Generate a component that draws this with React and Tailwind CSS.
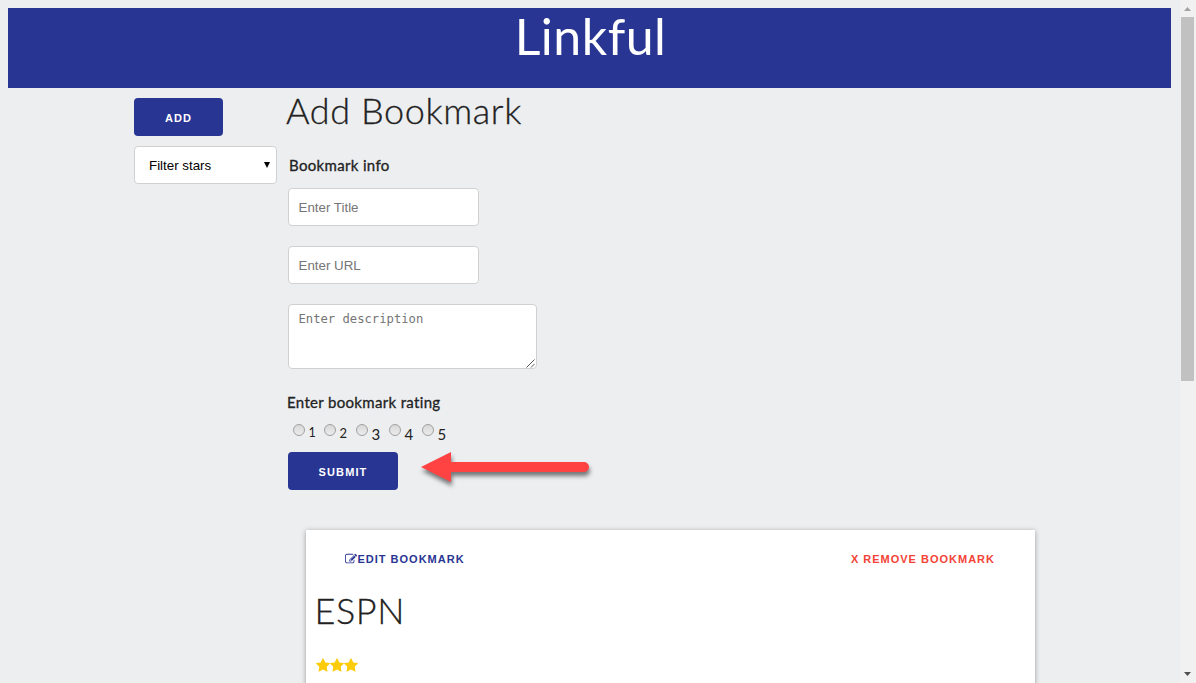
import React from "react";

const heading = "font-['Lato',sans-serif] text-[#222]";
const label = "text-[15px] leading-[24px] tracking-[0.33px] [-webkit-text-stroke:0.3px_#222]";
const button =
  "h-[38px] rounded-[4px] bg-[#283593] font-['Liberation_Sans',sans-serif] text-[11px] font-bold leading-[40px] tracking-[1.1px] text-white";
const field =
  "block rounded-[4px] border border-[#d1d1d1] bg-white px-[9.500px] text-[13.33px] placeholder-[#757575] outline-none";

function EditIcon() {
  return (
    <svg className="h-[12px] w-[12px]" viewBox="0 0 1792 1792" fill="currentColor">
      <path d="M888 1184l116-116-152-152-116 116v56h96v96h56zm440-720q-16-16-33 1l-350 350q-17 17-1 33t33-1l350-350q17-17 1-33zm80 594v190q0 119-84.500 203.500t-203.500 84.500h-832q-119 0-203.500-84.500t-84.500-203.500v-832q0-119 84.500-203.500t203.500-84.500h832q63 0 117 25 15 7 18 23 3 17-9 29l-49 49q-14 14-32 8-23-6-45-6h-832q-66 0-113 47t-47 113v832q0 66 47 113t113 47h832q66 0 113-47t47-113v-126q0-13 9-22l64-64q15-15 35-7t20 29zm-96-738l288 288-672 672h-288v-288zm444 132l-92 92-288-288 92-92q28-28 68-28t68 28l152 152q28 28 28 68t-28 68z" />
    </svg>
  );
}

function Star() {
  return (
    <svg className="h-[15px] w-[14px]" viewBox="64 0 1664 1792" fill="#fccc0a">
      <path d="M1728 647q0 22-26 48l-363 354 86 500q1 7 1 20 0 21-10.500 35.500t-30.500 14.500q-19 0-40-12l-449-236-449 236q-22 12-40 12-21 0-31.500-14.500t-10.500-35.500q0-6 2-20l86-500-364-354q-25-27-25-48 0-37 56-46l502-73 225-455q19-41 49-41t49 41l225 455 502 73q56 9 56 46z" />
    </svg>
  );
}

// Old-style figures: 1 and 2 sit at x-height, the others drop below the line.
const ratings = [
  { n: 1, box: "w-[31px]", digit: "pt-[2px] text-[12.5px]" },
  { n: 2, box: "w-[32px]", digit: "pt-[2px] text-[13px]" },
  { n: 3, box: "w-[33px]", digit: "pt-[3px] text-[15px]" },
  { n: 4, box: "w-[33px]", digit: "pt-[3px] text-[15px]" },
  { n: 5, box: "w-[33px]", digit: "pt-[3px] text-[15px]" },
];

function Arrow() {
  return (
    <svg
      className="-mt-[8px] ml-[20px] h-[50px] w-[182px] drop-shadow-[1px_4px_2px_rgba(0,0,0,0.5)]"
      viewBox="418 442 182 50"
      fill="#ff4343"
    >
      <path d="M421 467L451 452V462H584a5 5 0 0 1 0 10H451V482Z" />
    </svg>
  );
}

function Scrollbar() {
  return (
    <div className="flex h-full w-[17px] flex-col items-center border-l border-[#ececec] bg-[#f1f1f1] pr-[2px]">
      <svg className="h-[17px] w-[17px] shrink-0" viewBox="0 0 17 17" fill="#a3a3a3">
        <path d="M5 11L8.500 7L12 11Z" />
      </svg>
      <div className="h-[364px] w-[13px] bg-[#c1c1c1]" />
      <svg className="mt-auto h-[17px] w-[17px] shrink-0" viewBox="0 0 17 17" fill="#505050">
        <path d="M5 6L8.500 10L12 6Z" />
      </svg>
    </div>
  );
}

export default function App() {
  return (
    <div className="flex h-[683px] w-[1196px] overflow-hidden bg-[#edeef0]">
      <div className="flex min-w-0 flex-1 flex-col pl-2 pr-2 pt-2">
        <header className="h-[80px] shrink-0 bg-[#283593] text-center">
          <h1 className="pl-[2px] font-['Lato',sans-serif] text-[50px] font-normal leading-[56px] tracking-[0.5px] text-white">
            Linkful
          </h1>
        </header>

        <div className="flex pl-[126px]">
          <aside className="flex w-[143px] flex-col gap-[10px] pt-[10px]">
            <button className={button + " w-[89px]"}>ADD</button>
            <button className="flex h-[38px] items-center justify-between rounded-[4px] border border-[#d1d1d1] bg-white pl-[14px] pr-[6px] font-['Liberation_Sans',sans-serif] text-[13.33px] text-black">
              <span className="pt-[2px]">Filter stars</span>
              <svg className="h-[6px] w-[6px]" viewBox="0 0 6 6">
                <path d="M0 0H6L3 6Z" />
              </svg>
            </button>
          </aside>

          <main className="ml-[11px] w-[748px]">
            <h2 className={heading + " -ml-[2px] h-[58px] whitespace-nowrap text-[36px] font-light leading-[45px] tracking-[0.6px] [-webkit-text-stroke:0.3px_#222]"}>
              Add Bookmark
            </h2>
            <h3 className={heading + " ml-[1px] h-[42px] pt-[7px] " + label}>Bookmark info</h3>
            <input
              className={field + " h-[38px] w-[191px] font-['Liberation_Sans',sans-serif]"}
              placeholder="Enter Title"
            />
            <input
              className={field + " mt-[20px] h-[38px] w-[191px] font-['Liberation_Sans',sans-serif]"}
              placeholder="Enter URL"
            />
            <div className={field + " mt-[20px] flex h-[65px] w-[249px] justify-between pr-0"}>
              <span className="pt-[6px] font-['DejaVu_Sans_Mono',monospace] text-[12.2px] leading-[16px] text-[#757575]">
                Enter description
              </span>
              <svg className="h-[9px] w-[10px] self-end" viewBox="0 0 10 9" stroke="#555" fill="none">
                <path d="M0.500 8.500L8.500 0.500M5 8.500L8.500 5" />
              </svg>
            </div>
            <h3 className={heading + " -ml-px mt-[21px] h-[31px] " + label}>Enter bookmark rating</h3>
            <div className="flex h-[31px] pl-[5px] pt-[3px]">
              {ratings.map((r) => (
                <label key={r.n} className={"flex gap-[3.500px] " + r.box}>
                  <input
                    type="radio"
                    name="rating"
                    className="h-[12px] w-[12px] appearance-none rounded-full border border-[#a0a0a0] bg-linear-to-b from-[#d8d8d8] to-[#ececec]"
                  />
                  <span className={"font-['Lato',sans-serif] leading-[14px] text-[#222] " + r.digit}>{r.n}</span>
                </label>
              ))}
            </div>
            <div className="flex h-[38px] items-center">
              <button className={button + " w-[110px]"}>SUBMIT</button>
              <Arrow />
            </div>

            <section className="ml-[18px] mt-[40px] h-[300px] w-[729px] bg-white shadow-[0_1px_5px_rgba(0,0,0,0.35)]">
              <div className="flex justify-between pl-[39px] pr-[40px] pt-[19px] font-['Liberation_Sans',sans-serif] text-[11px] font-bold leading-[20px]">
                <button className="flex items-center tracking-[1px] text-[#283593]">
                  <EditIcon />
                  <span className="ml-[0.500px]">EDIT BOOKMARK</span>
                </button>
                <button className="tracking-[1px] text-[#f44336]">X REMOVE BOOKMARK</button>
              </div>
              <h2 className={heading + " mt-[19px] pl-[8.500px] text-[36px] font-light leading-[44px] tracking-[0.6px] [-webkit-text-stroke:0.3px_#222]"}>
                ESPN
              </h2>
              <div className="mt-[26px] flex pl-[9.500px]">
                <Star />
                <Star />
                <Star />
              </div>
            </section>
          </main>
        </div>
      </div>
      <Scrollbar />
    </div>
  );
}
